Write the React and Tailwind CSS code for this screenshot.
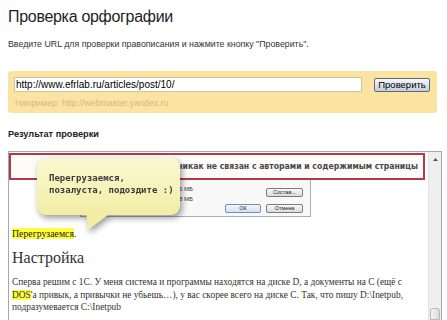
export default function App() {
  return (
    <div className="relative w-[447px] h-[320px] overflow-hidden bg-white font-['Liberation_Sans',Arial,sans-serif] text-[#222]">
      <div className="px-2 pt-[7px]">
        <h1 className="text-[16px] leading-[20px] font-normal tracking-[-0.3px] text-[#1e1e1e]">Проверка орфографии</h1>
        <p className="mt-[11px] text-[8.8px] leading-[12px] text-[#333] whitespace-nowrap">
          Введите URL для проверки правописания и нажмите кнопку "Проверить".
        </p>
        <div className="mt-[21px] mr-[2px] h-[42px] rounded-[3px] bg-[#fbe3a2] pl-[6px] pr-[7px] pt-[6px]">
          <div className="flex items-start gap-[12px]">
            <div className="w-[348px] h-[15px] bg-white border border-[#cfc3a4] text-[10px] leading-[13px] pl-[1px] text-black whitespace-nowrap">
              http://www.efrlab.ru/articles/post/10/
            </div>
            <button className="mt-[1px] w-[56px] h-[14px] rounded-[2px] border border-[#5f6a78] bg-gradient-to-b from-[#f5f7fa] to-[#c5cfdc] text-[9.5px] leading-[12px] text-black">
              Проверить
            </button>
          </div>
          <div className="mt-[5px] pl-[1px] text-[8.9px] leading-[12px] text-[#d3ba86] whitespace-nowrap">
            Например: http://webmaster.yandex.ru
          </div>
        </div>
        <div className="mt-[15px] text-[9.2px] leading-[12px] font-bold text-[#222]">Результат проверки</div>

        <div className="mt-[11px] flex w-[434px] h-[169px] overflow-hidden border-l border-t border-r border-[#a8a8a8]">
          <div className="w-[419px] shrink-0">
            <div className="mt-[1px] mr-[3px] h-[27px] border-2 border-[#b23a47] bg-[#fdfafa] flex items-center justify-end pr-[5px]">
              <span className="font-['DejaVu_Sans_Condensed','DejaVu_Sans',sans-serif] font-bold text-[8.6px] leading-[11px] text-[#484848] whitespace-nowrap">
                никак не связан с авторами и содержимым страницы
              </span>
            </div>
            <div className="ml-[71px] w-[231px] h-[37px] border-l border-r border-b border-[#9fb0c8] bg-[#f8f8f8] pt-[4px] font-['Liberation_Sans',Arial,sans-serif]">
              <div className="flex items-start h-[20px]">
                <div className="ml-[98px] text-[6px] leading-[10px] text-[#333]">
                  <div>5 МБ</div>
                  <div>8 МБ</div>
                </div>
                <div className="ml-auto mr-[7px] mt-[4px] w-[37px] h-[9px] rounded-[2px] border border-[#7a7a7a] bg-gradient-to-b from-[#f8f8f8] to-[#dcdcdc] text-[5.5px] leading-[7px] text-center text-[#222]">
                  Состав...
                </div>
              </div>
              <div className="flex justify-end gap-[5px] mr-[7px]">
                <div className="w-[36px] h-[9px] rounded-[2px] border border-[#6f8fb5] bg-gradient-to-b from-[#f2f6fb] to-[#d6e0ec] text-[5.5px] leading-[7px] text-center text-[#222]">
                  ОК
                </div>
                <div className="w-[37px] h-[9px] rounded-[2px] border border-[#7a7a7a] bg-gradient-to-b from-[#f8f8f8] to-[#dcdcdc] text-[5.5px] leading-[7px] text-center text-[#222]">
                  Отмена
                </div>
              </div>
            </div>
            <div className="mt-[10px] pl-[3px] font-['Liberation_Serif','Times_New_Roman',serif] text-[9.8px] leading-[13px] text-[#222]">
              <span className="bg-[#ffff3a]">Перегрузаемся</span>.
            </div>
            <div className="mt-[8px] pl-[3px] font-['Liberation_Serif','Times_New_Roman',serif] text-[16px] leading-[20px] text-[#333]">
              Настройка
            </div>
            <div className="mt-[8px] pl-[3px] font-['Liberation_Serif','Times_New_Roman',serif] text-[9.4px] leading-[12.5px] text-[#333] whitespace-nowrap">
              Сперва решим с 1С. У меня система и программы находятся на диске D, а документы на С (ещё с
              <br />
              <span className="bg-[#ffff3a]">DOS</span>'а привык, а привычки не убьешь…), у вас скорее всего на диске С. Так, что пишу D:\Inetpub,
              <br />
              подразумевается C:\Inetpub
            </div>
          </div>
          <div className="w-[13px] shrink-0 flex flex-col bg-[#efefef] border-l border-[#e2e2e2]">
            <div className="h-[14px] flex items-center justify-center">
              <svg width="5" height="3" viewBox="0 0 5 3"><polygon points="0,3 5,3 2.5,0" fill="#555" /></svg>
            </div>
            <div className="mt-auto mx-[1px] h-[12px] rounded-t-[3px] border border-[#b8b8b8] bg-gradient-to-r from-[#f4f4f4] to-[#dcdcdc]" />
          </div>
        </div>
      </div>

      <div className="absolute left-[37px] top-[158px] w-[143px] h-[74px] drop-shadow-[2px_3px_3px_rgba(0,0,0,0.4)]">
        <div className="w-[143px] h-[57px] rounded-[9px] bg-gradient-to-b from-[#fbf9d2] to-[#f1eda4] pl-[12px] pt-[14px] font-['DejaVu_Sans_Mono',monospace] font-bold text-[9px] leading-[12px] text-[#3a3a3a] whitespace-nowrap">
          Перегрузаемся,
          <br />
          позалуста, подоздите :)
        </div>
        <svg className="absolute left-[45px] top-[54px]" width="34" height="20" viewBox="0 0 34 20">
          <polygon points="4,0 30,0 6,18" fill="#f1eda4" />
        </svg>
      </div>
    </div>
  );
}
